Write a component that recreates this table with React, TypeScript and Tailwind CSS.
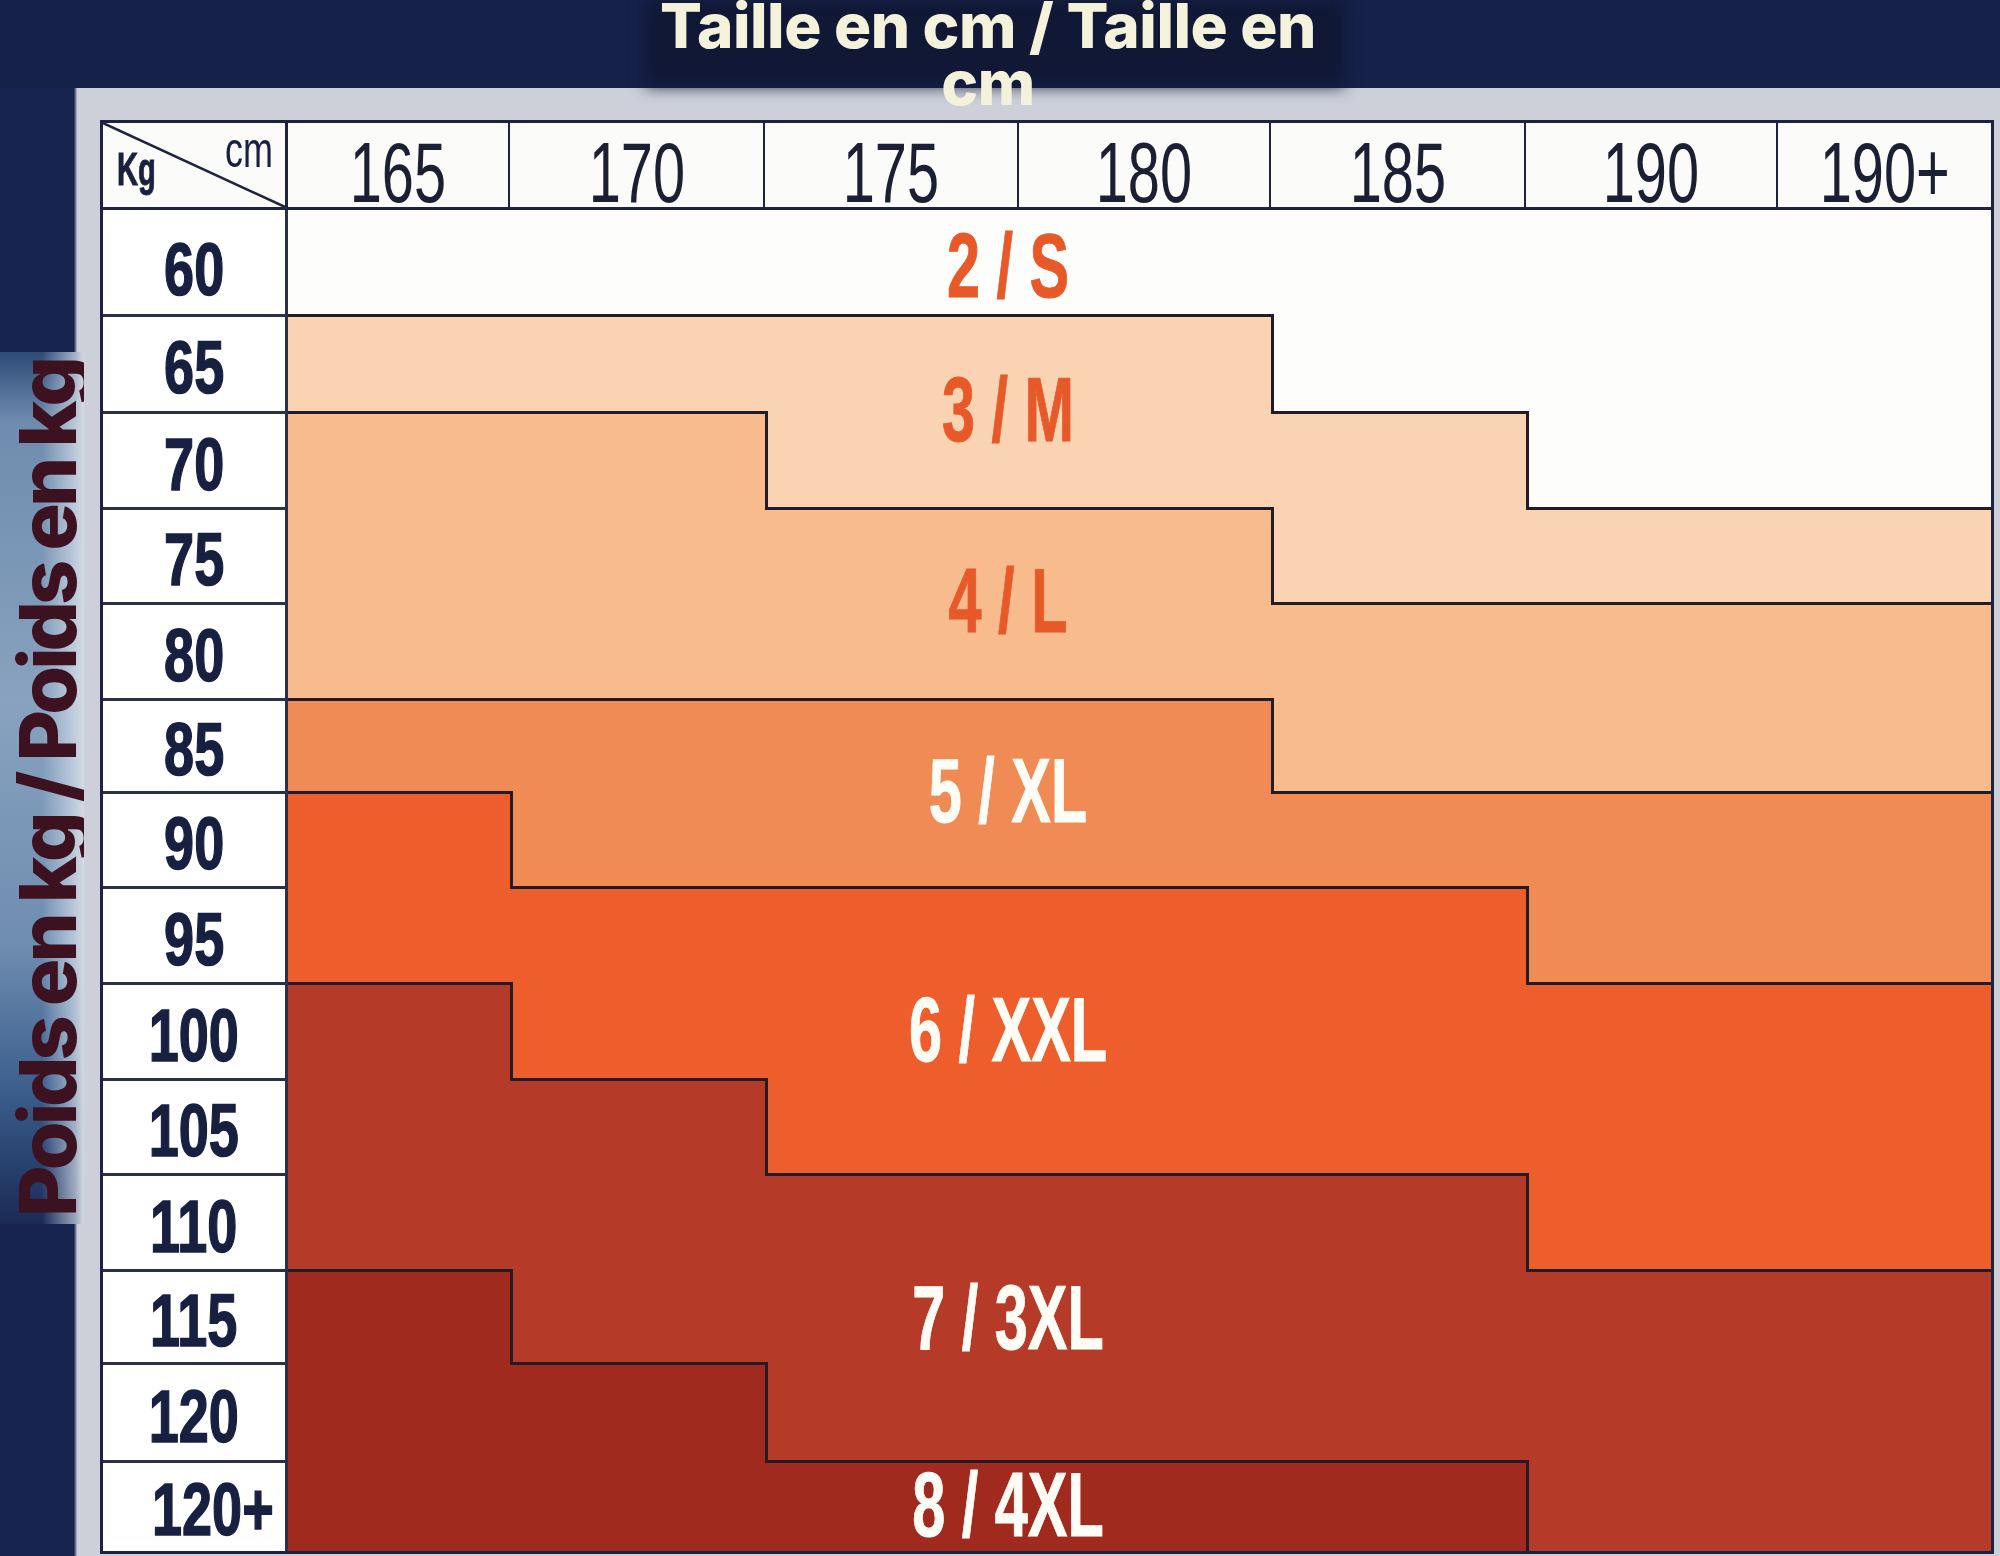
import React from 'react';

const weights = ['60', '65', '70', '75', '80', '85', '90', '95', '100', '105', '110', '115', '120', '120+'];
const heights = ['165', '170', '175', '180', '185', '190', '190+'];

// zone index per row (weights) and column (heights)
const zoneMap = [
  '0000000',
  '1111000',
  '2211100',
  '2222111',
  '2222222',
  '3333222',
  '4333333',
  '4444433',
  '5444444',
  '5544444',
  '5555544',
  '6555555',
  '6655555',
  '6666655',
];

const zoneBg = [
  'bg-[#fdfdfc]',
  'bg-[#fad3b2]',
  'bg-[#f7bb8d]',
  'bg-[#f08b55]',
  'bg-[#ee5e2d]',
  'bg-[#b63a28]',
  'bg-[#a02a1e]',
];

const sizeLabels = [
  { text: '2 / S', pos: 'top-[143px]', color: 'text-[#e8592a]' },
  { text: '3 / M', pos: 'top-[287px]', color: 'text-[#e8592a]' },
  { text: '4 / L', pos: 'top-[478px]', color: 'text-[#e8592a]' },
  { text: '5 / XL', pos: 'top-[668px]', color: 'text-[#fffdf6]' },
  { text: '6 / XXL', pos: 'top-[907px]', color: 'text-[#fffdf6]' },
  { text: '7 / 3XL', pos: 'top-[1195px]', color: 'text-[#fffdf6]' },
  { text: '8 / 4XL', pos: 'top-[1382px]', color: 'text-[#fffdf6]' },
];

const SizeChart = () => {
  return (
    <div className="relative border-[3px] border-[#1c2342] bg-white">
      <div className="grid grid-cols-[185px_222px_255px_254px_252px_255px_252px_213px] grid-rows-[87px_104px_97px_96px_95px_96px_93px_95px_96px_96px_95px_96px_93px_98px_91px]">
        {/* corner cell */}
        <div className="relative border-r-[3px] border-b-[3px] border-[#1e2440] bg-[#fbfbfa]">
          <svg className="absolute inset-0 h-full w-full" viewBox="0 0 182 84" preserveAspectRatio="none">
            <line x1="0" y1="0" x2="182" y2="84" stroke="#1e2440" strokeWidth="2.5" />
          </svg>
          <span className="absolute left-[14px] top-[22px] inline-block origin-left scale-x-[0.62] font-['Liberation_Sans',sans-serif] text-[47px] font-bold leading-none text-[#1a2140] [-webkit-text-stroke:1px_#1a2140]">
            Kg
          </span>
          <span className="absolute left-[122px] top-[2px] inline-block origin-left scale-x-[0.72] font-['Liberation_Sans',sans-serif] text-[50px] leading-none text-[#1a2140]">
            cm
          </span>
        </div>

        {/* header heights */}
        {heights.map((h, i) => (
          <div
            key={h}
            className={`flex justify-center items-start pt-[7px] border-b-[3px] border-[#1e2440] bg-[#fbfbfa] ${i < heights.length - 1 ? 'border-r-2' : ''}`}
          >
            <span className="inline-block scale-x-[0.68] font-['Liberation_Sans',sans-serif] text-[85px] leading-none text-[#1a1f33]">
              {h}
            </span>
          </div>
        ))}

        {/* body rows */}
        {weights.map((w, r) => (
          <React.Fragment key={w}>
            <div
              className={`flex items-center bg-white border-r-[3px] border-[#2b3048] ${r > 0 ? 'border-t-[3px]' : ''} ${w === '120+' ? 'justify-start pl-[49px] pt-[6px]' : r === 0 ? 'justify-center pt-[16px]' : 'justify-center pt-[8px]'}`}
            >
              <span
                className={`inline-block ${w === '120+' ? 'origin-left' : 'origin-center'} scale-x-[0.73] font-['Liberation_Sans',sans-serif] text-[74px] font-bold leading-none text-[#172041] [-webkit-text-stroke:1.5px_#172041]`}
              >
                {w}
              </span>
            </div>
            {zoneMap[r].split('').map((z, c) => {
              const zone = Number(z);
              const top = r > 0 && zoneMap[r - 1][c] !== z;
              const left = c > 0 && zoneMap[r][c - 1] !== z;
              return (
                <div
                  key={c}
                  className={`${zoneBg[zone]} border-[#221c26] ${top ? 'border-t-[3px]' : ''} ${left ? 'border-l-[3px]' : ''}`}
                />
              );
            })}
          </React.Fragment>
        ))}
      </div>

      {/* size labels over the chart */}
      {sizeLabels.map((l) => (
        <div
          key={l.text}
          className={`absolute left-[905px] ${l.pos} -translate-x-1/2 -translate-y-1/2 whitespace-nowrap`}
        >
          <span
            className={`inline-block scale-x-[0.66] font-['Liberation_Sans',sans-serif] text-[90px] font-bold leading-none ${l.color} [-webkit-text-stroke:1px_currentColor]`}
          >
            {l.text}
          </span>
        </div>
      ))}
    </div>
  );
};

export default function App() {
  return (
    <div className="flex h-[1556px] w-[2000px] flex-col overflow-hidden bg-[#162149]">
      {/* title band */}
      <div className="relative z-10 h-[88px] shrink-0">
        <div className="absolute left-[645px] top-0 h-[86px] w-[700px] bg-[#101835] blur-[8px]" />
        <div className="absolute left-[638px] top-[-3px] w-[700px] text-center font-['Inter',sans-serif] text-[62px] font-extrabold leading-[57px] tracking-[-0.5px] text-[#f5f2dc]">
          Taille en cm / Taille en cm
        </div>
      </div>

      <div className="flex flex-1">
        {/* left strip with vertical caption */}
        <div className="flex w-[84px] shrink-0 flex-col overflow-hidden bg-[linear-gradient(to_right,#172450_0%,#172450_88%,#cdd0d9_92%)]">
          <div className="h-[264px] shrink-0" />
          <div className="flex h-[872px] shrink-0 items-center justify-start overflow-hidden pl-[1px] bg-[linear-gradient(to_right,rgba(255,255,255,0)_50%,rgba(226,233,242,0.65)_90%,#d6d9e1_100%),linear-gradient(to_bottom,#2d4a78_0%,#6f8cae_8%,#88a2bf_40%,#6f8db0_68%,#3a5d8c_85%,#1a2a55_100%)]">
            <div className="rotate-180 whitespace-nowrap font-['Inter',sans-serif] text-[79px] font-extrabold leading-[92px] tracking-[-4px] text-[#3d1220] [writing-mode:vertical-rl]">
              Poids en kg / Poids en kg
            </div>
          </div>
          <div className="flex-1" />
        </div>

        {/* grey frame around the table */}
        <div className="flex-1 bg-[#cdd0d9] pl-[16px] pr-[6px] pt-[32px]">
          <SizeChart />
        </div>
      </div>
    </div>
  );
}
